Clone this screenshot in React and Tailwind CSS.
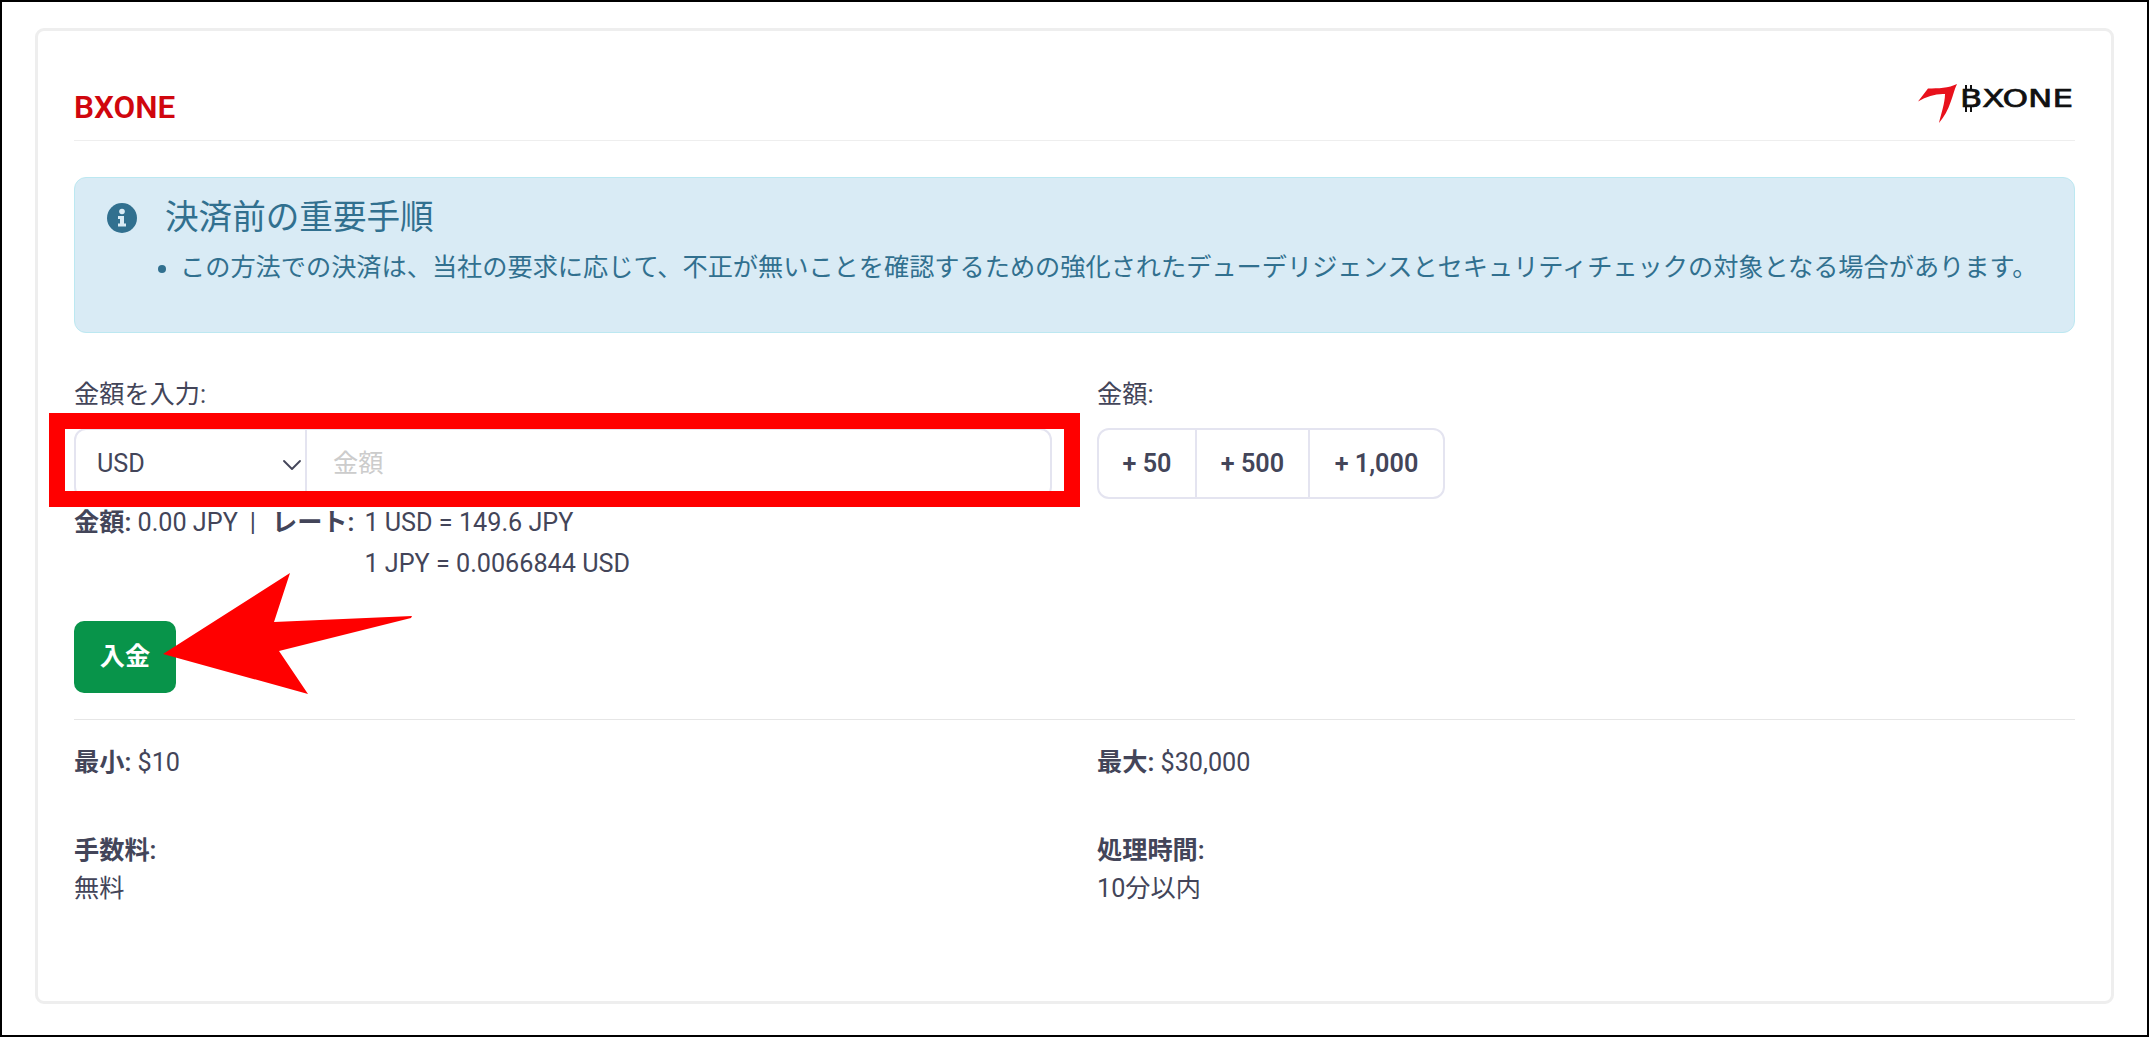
import React from "react";
import { ChevronDown } from "lucide-react";

function Logo() {
  return (
    <svg width="158" height="42" viewBox="0 0 158 42" className="block">
      {/* red swoosh */}
      <path
        d="M0 17.5 L10 4.5 C20 4.5 31 4 39 0 C36 6 35 12 33 17 C30 26 26 33 21 39 C23 30 27 19 27 10 C18 9.5 9 12 0 17.5 Z"
        fill="#e8111c"
      />
      {/* ticks of the coin B */}
      <rect x="47" y="1" width="2" height="5" fill="#111" />
      <rect x="52" y="1" width="2" height="5" fill="#111" />
      <rect x="47" y="23" width="2" height="5" fill="#111" />
      <rect x="52" y="23" width="2" height="5" fill="#111" />
      <text
        x="42"
        y="23"
        textLength="113"
        lengthAdjust="spacingAndGlyphs"
        fontFamily="'DejaVu Sans', sans-serif"
        fontWeight="400"
        fontSize="24.7"
        fill="#111"
        stroke="#111"
        strokeWidth="0.7"
      >
        BXONE
      </text>
    </svg>
  );
}

function InfoIcon() {
  return (
    <svg width="30" height="30" viewBox="0 0 30 30" className="shrink-0 block">
      <circle cx="15" cy="15" r="15" fill="#31708f" />
      <circle cx="15" cy="8.5" r="2.8" fill="#d9ebf5" />
      <path d="M11 13 H17 V20.5 H19 V23.5 H11 V20.5 H13 V16 H11 Z" fill="#d9ebf5" />
    </svg>
  );
}

function Arrow() {
  return (
    <svg width="2149" height="1037" className="absolute left-0 top-0 pointer-events-none">
      <polygon points="163,654 290,573 274,622 412,616 411,618 279,651 308,694" fill="#ff0000" />
    </svg>
  );
}

export default function App() {
  return (
    <div className="relative h-[1037px] w-full bg-white border-2 border-black pt-[26px] px-[33px] pb-[31px] text-[25.2px] text-[#434559] font-[Roboto,'Noto_Sans_CJK_JP',sans-serif]">
      <div className="h-full border-[3px] border-[#eeeeee] rounded-[9px] px-[36px] pt-[47px]">
        {/* header */}
        <div className="h-[63px] flex items-start justify-between border-b border-[#eeeeee]">
          <h1 className="text-[31.5px] leading-[60px] font-semibold text-[#d0060e]">BXONE</h1>
          <div className="mt-[6px] -mr-[1px]">
            <Logo />
          </div>
        </div>

        {/* notice */}
        <div className="mt-[36px] h-[156px] rounded-[12px] border border-[#bce8f1] bg-[#d9ebf5] pl-[32px] pt-[20px] text-[#31708f]">
          <div className="flex items-center gap-[28px] h-[40px]">
            <InfoIcon />
            <h2 className="text-[33.6px] leading-[40px]">決済前の重要手順</h2>
          </div>
          <ul className="mt-[10px] pl-[73px] list-disc leading-[40px]">
            <li>
              この方法での決済は、当社の要求に応じて、不正が無いことを確認するための強化されたデューデリジェンスとセキュリティチェックの対象となる場合があります。
            </li>
          </ul>
        </div>

        {/* amount form */}
        <div className="mt-[45px] grid grid-cols-2 gap-x-[45px]">
          <div>
            <label className="block leading-[34px] mb-[16px]">金額を入力:</label>
            <div className="flex h-[71px]">
              <div className="relative w-[233px] shrink-0">
                <select className="w-full h-full appearance-none bg-white border-2 border-[#e4e4f0] rounded-l-[12px] pl-[21px] outline-none">
                  <option>USD</option>
                </select>
                <ChevronDown className="absolute -right-[1px] top-[21px] w-[32px] h-[32px] text-[#434559]" strokeWidth={1.4} />
              </div>
              <input
                placeholder="金額"
                className="flex-1 min-w-0 h-full border-2 border-l-0 border-[#e4e4f0] rounded-r-[12px] pl-[26px] outline-none placeholder:text-[#cccccc]"
              />
            </div>
            <div className="mt-[3px] flex leading-[41px]">
              <div>
                <b className="font-semibold">金額:</b> 0.00 JPY
                <span className="ml-[12px] mr-[16px]">|</span>
                <b className="font-semibold">レート:</b>
              </div>
              <div className="ml-[10px]">
                <div>1 USD = 149.6 JPY</div>
                <div>1 JPY = 0.0066844 USD</div>
              </div>
            </div>
          </div>
          <div>
            <label className="block leading-[34px] mb-[16px]">金額:</label>
            <div className="inline-flex h-[71px] border-2 border-[#e4e4f0] rounded-[12px] font-semibold">
              <button className="w-[98px] border-r-2 border-[#e4e4f0]">+ 50</button>
              <button className="w-[113px] border-r-2 border-[#e4e4f0]">+ 500</button>
              <button className="w-[133px]">+ 1,000</button>
            </div>
          </div>
        </div>

        <button className="mt-[37px] block w-[102px] h-[72px] rounded-[10px] bg-[#08944a] text-white font-semibold">
          入金
        </button>

        {/* limits */}
        <div className="mt-[26px] border-t border-[#e6e6e6] pt-[23px] grid grid-cols-2 gap-x-[45px]">
          <div className="leading-[40px]">
            <b className="font-semibold">最小:</b> $10
          </div>
          <div className="leading-[40px]">
            <b className="font-semibold">最大:</b> $30,000
          </div>
          <div className="mt-[49px] leading-[38px]">
            <div className="font-semibold">手数料:</div>
            <div>無料</div>
          </div>
          <div className="mt-[49px] leading-[38px]">
            <div className="font-semibold">処理時間:</div>
            <div>10分以内</div>
          </div>
        </div>
      </div>

      {/* annotations on top of the screenshot */}
      <div className="absolute left-[47px] top-[411px] w-[1031px] h-[94px] border-[16px] border-[#ff0000] pointer-events-none" />
      <div className="absolute -left-[2px] -top-[2px]">
        <Arrow />
      </div>
    </div>
  );
}
